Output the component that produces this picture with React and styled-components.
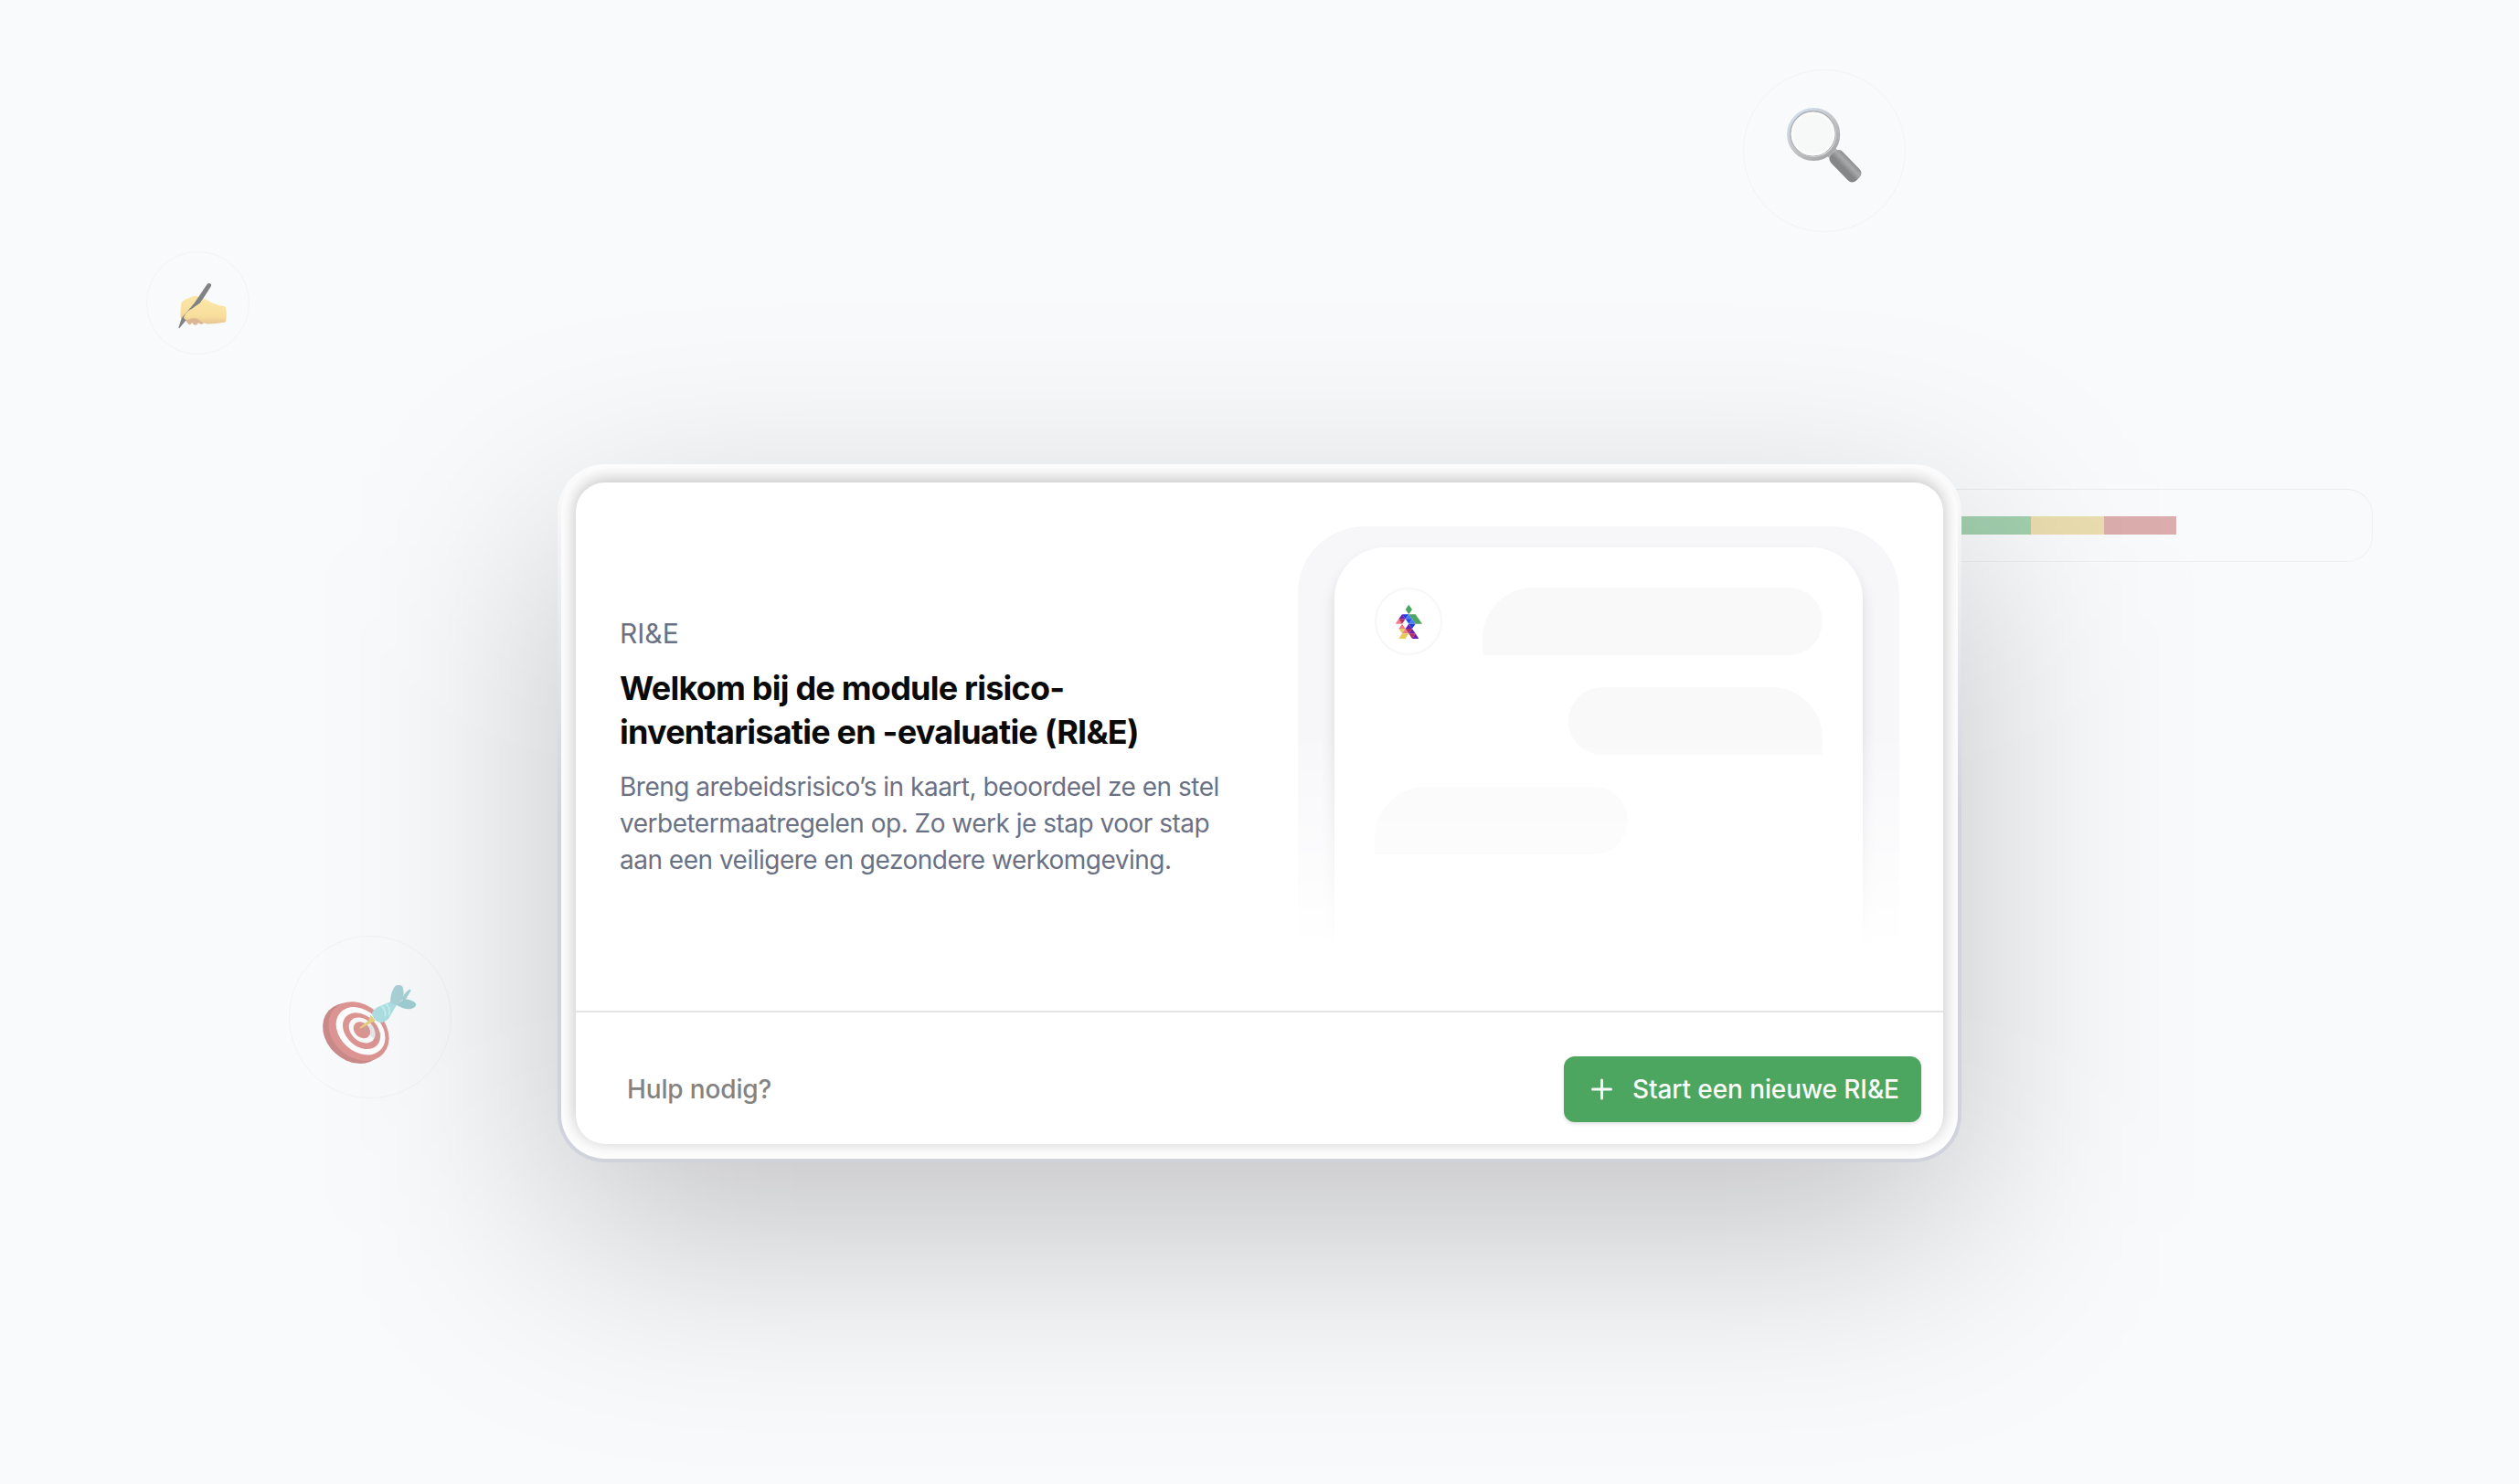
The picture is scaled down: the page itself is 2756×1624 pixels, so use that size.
import React from "react";
import styled, { createGlobalStyle } from "styled-components";

const GlobalStyle = createGlobalStyle`
  * {
    box-sizing: border-box;
  }

  body {
    margin: 0;
    background: #f9fafc;
    font-family: Inter, "Liberation Sans", sans-serif;
  }
`;

const Page = styled.main`
  position: relative;
  display: flex;
  justify-content: center;
  height: 1624px;
  padding-top: 508px;
  overflow: hidden;
`;

const Badge = styled.div`
  position: absolute;
  left: ${({ $x }) => $x}px;
  top: ${({ $y }) => $y}px;
  width: ${({ $size }) => $size}px;
  height: ${({ $size }) => $size}px;
  border: 1px solid #f2f3f5;
  border-radius: 50%;
  background: #f9fafc;

  svg {
    display: block;
    width: 100%;
    height: 100%;
    overflow: visible;
  }
`;

const Pill = styled.div`
  position: absolute;
  left: 2096px;
  top: 535px;
  display: flex;
  align-items: center;
  width: 500px;
  height: 80px;
  padding-left: 46px;
  border: 1px solid #eff1f3;
  border-top-color: #eaecee;
  border-radius: 28px;
  background: #f9fafc;
`;

const Segment = styled.span`
  width: 79.3px;
  height: 20px;
  background: ${({ $color }) => $color};
`;

const Stage = styled.div`
  position: relative;
  isolation: isolate;
  width: 1536px;
  height: 764px;

  /* soft drop shadow, blurred as its own layer */
  &::before {
    content: "";
    position: absolute;
    z-index: -1;
    top: 80px;
    left: 0;
    width: 100%;
    height: 100%;
    border-radius: 52px;
    background: rgba(0, 0, 0, 0.22);
    filter: blur(120px);
  }
`;

const Frame = styled.section`
  height: 100%;
  padding: 4px;
  border-radius: 52px;
  background: linear-gradient(180deg, #fcfcfc 0%, #d0d3dc 50%);
`;

const Panel = styled.div`
  height: 100%;
  padding: 16px;
  border-radius: 48px;
  background: #fff;
  overflow: hidden;
`;

const Card = styled.div`
  display: flex;
  flex-direction: column;
  height: 100%;
  border-radius: 32px;
  background: #fff;
  box-shadow: 0 -3px 20px rgba(0, 0, 0, 0.26);
`;

const Content = styled.div`
  display: grid;
  grid-template-columns: 658px 658px;
  justify-content: space-between;
  align-items: center;
  height: 578px;
  padding: 48px;
`;

const Intro = styled.div`
  display: flex;
  flex-direction: column;
  gap: 16px;
  white-space: nowrap;
`;

const Label = styled.span`
  color: #6b7185;
  font-size: 30px;
  line-height: 40px;
`;

const Title = styled.h1`
  margin: 0;
  color: #0a0a0a;
  font-size: 36px;
  font-weight: 700;
  line-height: 48px;
  letter-spacing: -0.78px;
`;

const Description = styled.p`
  margin: 0;
  color: #6b7185;
  font-size: 28px;
  line-height: 40px;
  letter-spacing: -0.5px;
`;

const Preview = styled.div`
  align-self: start;
  height: 482px;
  padding: 23px 40px 0;
  border-radius: 72px 72px 0 0;
  background: #f7f7fa;
  mask-image: linear-gradient(180deg, #000 46%, transparent 96%);
`;

const Chat = styled.div`
  display: flex;
  flex-direction: column;
  gap: 35px;
  height: 100%;
  padding: 44px;
  border-radius: 56px 56px 0 0;
  background: #fff;
  box-shadow: 0 10px 16px rgba(0, 0, 0, 0.12);
`;

const ChatRow = styled.div`
  display: flex;
  justify-content: ${({ $align }) => $align || "space-between"};
`;

const Avatar = styled.div`
  display: flex;
  align-items: center;
  justify-content: center;
  width: 74px;
  height: 74px;
  border: 2px solid #f7f7f7;
  border-radius: 50%;
`;

const Bubble = styled.div`
  width: ${({ $width }) => $width}px;
  height: 74px;
  border-radius: ${({ $own }) =>
    $own ? "37px 56px 0 37px" : "56px 37px 37px 0"};
  background: #f9f9f9;
`;

const Footer = styled.footer`
  display: flex;
  align-items: center;
  justify-content: space-between;
  height: 146px;
  padding: 24px 24px 0 56px;
  border-top: 2px solid #e5e5e5;
`;

const HelpLink = styled.a`
  color: #838383;
  font-size: 28px;
  font-weight: 500;
  line-height: 40px;
  letter-spacing: -0.15px;
`;

const StartButton = styled.button`
  display: flex;
  align-items: center;
  gap: 17px;
  height: 72px;
  width: 391px;
  padding: 0 0 0 26px;
  border: 0;
  border-radius: 12px;
  background: #4da660;
  box-shadow: 0 2px 4px rgba(0, 0, 0, 0.12);
  color: #fafafa;
  font-family: inherit;
  font-size: 28px;
  font-weight: 500;
  letter-spacing: -0.1px;
  white-space: nowrap;
`;

const WritingHand = () => (
  <svg viewBox="61 44 339 339">
    <defs>
      <linearGradient id="skin" x1="0" y1="0" x2="0" y2="1">
        <stop offset="0" stopColor="#fbe7a8" />
        <stop offset="0.7" stopColor="#f8de9c" />
        <stop offset="1" stopColor="#e6c494" />
      </linearGradient>
    </defs>
    <path d="M186 262 Q192 278 200 285 Q206 289 211 279 Q218 292 228 285 L232 279 Q242 290 250 280 L262 268 L240 240 L200 244 Z" fill="#dcb593" />
    <path d="M173 262 Q171 240 175 214 Q178 206 190 201 L214 191 Q224 188 232 193 L226 224 L194 268 Q184 274 173 262 Z" fill="url(#skin)" />
    <path d="M262 150 Q269 145 275 152 Q276 156 273 160 L236 218 L190 272 L168 299 L166 296 L176 265 L218 215 Z" fill="#808284" />
    <path d="M186 256 Q192 242 212 232 L240 212 Q246 198 254 200 Q282 220 322 226 Q330 250 323 278 Q290 284 262 284 Q244 280 228 266 Q212 262 200 269 Q186 272 183 262 Z" fill="url(#skin)" />
  </svg>
);

const Dartboard = () => (
  <svg viewBox="50 41 533 533">
    <g transform="rotate(42 268 356)">
      <ellipse cx="267" cy="364" rx="112" ry="90" fill="#c98a89" />
      <ellipse cx="275" cy="348" rx="110" ry="87" fill="#dc9592" />
      <ellipse cx="279" cy="343" rx="91" ry="68" fill="#fdfdfd" />
      <ellipse cx="281" cy="341" rx="70" ry="51" fill="#dc9592" />
      <ellipse cx="281" cy="338" rx="49" ry="36" fill="#f9f9fa" />
      <ellipse cx="280" cy="338" rx="31" ry="24" fill="#dc9592" />
    </g>
    <path d="M288 345 L346 392 L354 362 L324 330 Z" fill="#aeb0b2" opacity="0.25" />
    <path d="M281 342 L312 318 L318 300 L334 320 L322 326 L285 346 Z" fill="#e5cf80" />
    <path d="M322 296 Q326 282 345 273 L386 256 L404 268 L378 312 Q362 328 345 325 Q326 316 322 296 Z" fill="#addfe2" />
    <path d="M352 269 Q370 282 366 306 M367 263 Q386 276 379 300" fill="none" stroke="#c6eff0" strokeWidth="5" />
    <path d="M424 250 Q426 228 448 215 Q454 218 448 226 L430 256 Z" fill="#a4d2d6" />
    <path d="M383 258 Q384 224 400 204 Q412 198 423 205 Q430 220 426 248 L402 268 Z" fill="#a8d1d6" />
    <path d="M402 266 L430 248 Q458 250 469 264 Q468 276 448 281 Q424 282 402 266 Z" fill="#9fced3" />
  </svg>
);

const Magnifier = () => (
  <svg viewBox="50 48 536 536">
    <defs>
      <linearGradient id="rim" x1="0.1" y1="0" x2="0.9" y2="1">
        <stop offset="0" stopColor="#d3e0f2" />
        <stop offset="0.5" stopColor="#c4c5c7" />
        <stop offset="1" stopColor="#a0a1a3" />
      </linearGradient>
      <linearGradient id="grip" x1="0" y1="0" x2="0" y2="1">
        <stop offset="0" stopColor="#8e8f91" />
        <stop offset="0.3" stopColor="#a9aaac" />
        <stop offset="0.65" stopColor="#848587" />
        <stop offset="1" stopColor="#858688" />
      </linearGradient>
    </defs>
    <path d="M326 332 L352 304 L366 318 L338 344 Z" fill="#b5b6b8" />
    <circle cx="282" cy="261" r="82" fill="#f7f9f9" stroke="url(#rim)" strokeWidth="13" />
    <circle cx="280" cy="259" r="75" fill="none" stroke="#a8aaac" strokeWidth="3.5" />
    <circle cx="280" cy="260" r="69" fill="none" stroke="#fcfcfd" strokeWidth="7" />
    <g transform="translate(388 367) rotate(46)">
      <rect x="-60" y="-27" width="120" height="54" rx="19" fill="url(#grip)" />
    </g>
  </svg>
);

const Logo = () => (
  <svg width="31" height="39" viewBox="138 122 93 117" shapeRendering="geometricPrecision">
    <path d="M184 124 L195 140 L184 156 L173 140 Z" fill="#4da660" />
    <path d="M184 156 H206 L228 187 H206 Z" fill="#4da660" />
    <path d="M162 156 L173 171 H151 Z" fill="#6a1fb0" />
    <path d="M162 156 H184 L173 171 Z" fill="#1d3fe0" />
    <path d="M184 156 L195 171 H173 Z" fill="#4a7df4" />
    <path d="M151 171 L162 187 H140 Z" fill="#f07c84" />
    <path d="M151 171 H173 L162 187 Z" fill="#b32d62" />
    <path d="M173 171 H195 L184 187 Z" fill="#1d4ae6" />
    <path d="M195 171 L206 187 H184 Z" fill="#4a7df4" />
    <path d="M184 187 H206 L195 203 Z" fill="#1d3fe0" />
    <path d="M184 187 L195 203 H173 Z" fill="#6a1fb0" />
    <path d="M162 187 L173 203 H151 Z" fill="#f07c84" />
    <path d="M151 203 H173 L162 219 Z" fill="#e6cb5c" />
    <path d="M173 203 L184 219 H162 Z" fill="#f07c84" />
    <path d="M173 203 H195 L184 219 Z" fill="#b32d62" />
    <path d="M195 203 L206 219 H184 Z" fill="#6a1fb0" />
    <path d="M162 219 H184 L173 236 H151 Z" fill="#e6cb5c" />
    <path d="M184 219 H206 L195 236 Z" fill="#b32d62" />
    <path d="M206 219 L217 236 H195 Z" fill="#6a1fb0" />
  </svg>
);

const PlusIcon = () => (
  <svg width="32" height="32" viewBox="0 0 32 32" fill="none" stroke="currentColor" strokeWidth="3" strokeLinecap="round">
    <path d="M15.5 6 V26 M5.5 16 H25.5" />
  </svg>
);

const App = () => {
  return (
    <Page>
      <GlobalStyle />
      <Badge $x={160} $y={275} $size={113}>
        <WritingHand />
      </Badge>
      <Badge $x={316} $y={1024} $size={178}>
        <Dartboard />
      </Badge>
      <Badge $x={1907} $y={76} $size={178}>
        <Magnifier />
      </Badge>
      <Pill>
        <Segment $color="#a3d0af" />
        <Segment $color="#eadeb0" />
        <Segment $color="#dbadac" />
      </Pill>

      <Stage>
        <Frame>
          <Panel>
            <Card>
              <Content>
                <Intro>
                  <Label>RI&amp;E</Label>
                  <Title>
                    Welkom bij de module risico-
                    <br />
                    inventarisatie en -evaluatie (RI&amp;E)
                  </Title>
                  <Description>
                    Breng arebeidsrisico’s in kaart, beoordeel ze en stel
                    <br />
                    verbetermaatregelen op. Zo werk je stap voor stap
                    <br />
                    aan een veiligere en gezondere werkomgeving.
                  </Description>
                </Intro>
                <Preview>
                  <Chat>
                    <ChatRow>
                      <Avatar>
                        <Logo />
                      </Avatar>
                      <Bubble $width={372} />
                    </ChatRow>
                    <ChatRow $align="flex-end">
                      <Bubble $width={278} $own />
                    </ChatRow>
                    <ChatRow $align="flex-start">
                      <Bubble $width={277} />
                    </ChatRow>
                  </Chat>
                </Preview>
              </Content>
              <Footer>
                <HelpLink>Hulp nodig?</HelpLink>
                <StartButton>
                  <PlusIcon />
                  <span>Start een nieuwe RI&amp;E</span>
                </StartButton>
              </Footer>
            </Card>
          </Panel>
        </Frame>
      </Stage>
    </Page>
  );
};

export default App;
